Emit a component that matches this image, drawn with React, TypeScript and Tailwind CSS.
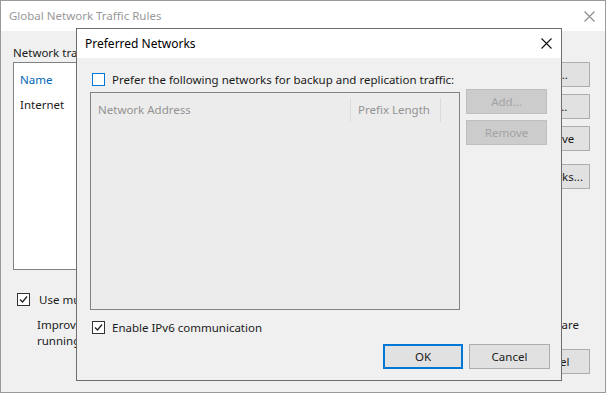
import { ReactNode } from "react";

function CloseIcon({ color }: { color: string }) {
  return (
    <svg width="11" height="11" viewBox="0 0 11 11">
      <path d="M0.5 0.5 L10.5 10.5 M10.5 0.5 L0.5 10.5" stroke={color} strokeWidth="1.1" />
    </svg>
  );
}

function CheckBox({ checked, focus }: { checked?: boolean; focus?: boolean }) {
  return (
    <div
      className={
        "w-[13px] h-[13px] shrink-0 bg-white border flex items-center justify-center " +
        (focus ? "border-[#0078d7]" : "border-[#333333]")
      }
    >
      {checked && (
        <svg width="9" height="9" viewBox="0 0 9 9">
          <path d="M1 4.5 L3.5 7 L8 1.5" stroke="#222" strokeWidth="1.3" fill="none" />
        </svg>
      )}
    </div>
  );
}

function Button({
  children,
  width,
  disabled,
  primary,
}: {
  children: ReactNode;
  width: string;
  disabled?: boolean;
  primary?: boolean;
}) {
  let cls = "h-[25px] flex items-center justify-center shrink-0 ";
  if (disabled) cls += "bg-[#cccccc] border border-[#bfbfbf] text-[#a3a3a3]";
  else if (primary) cls += "bg-[#e1e1e1] border-2 border-[#0078d7] text-[#1a1a1a]";
  else cls += "bg-[#e1e1e1] border border-[#adadad] text-[#1a1a1a]";
  return <div className={cls + " " + width}>{children}</div>;
}

function OuterWindow() {
  return (
    <div className="w-[606px] h-[393px] bg-[#f0f0f0] border border-[#9a9a9a] flex flex-col">
      <div className="h-[30px] bg-white flex items-center justify-between pl-[8px] pr-[10px] text-[#999999]">
        <span>Global Network Traffic Rules</span>
        <CloseIcon color="#8a8a8a" />
      </div>
      <div className="flex flex-col pl-[12px] pr-[15px]">
        <div className="mt-[13px] h-[18px] leading-[18px]">Network traffic rules:</div>
        <div className="flex gap-[7px]">
          <div className="flex-1 h-[208px] bg-white border border-[#828282] flex flex-col pl-[6px] pt-[8px]">
            <span className="text-[#0066b4] h-[18px]">Name</span>
            <span className="mt-[7px] h-[18px]">Internet</span>
          </div>
          <div className="flex flex-col gap-[7px] w-[75px]">
            <Button width="w-[75px]">Add...</Button>
            <Button width="w-[75px]">Edit...</Button>
            <Button width="w-[75px]">Remove</Button>
            <div className="mt-[6px]">
              <Button width="w-[75px]">Networks...</Button>
            </div>
          </div>
        </div>
        <div className="mt-[21px] flex items-center gap-[9px] pl-[4px]">
          <CheckBox checked />
          <span>Use multiple upload streams per job</span>
        </div>
        <div className="mt-[9px] pl-[24px] leading-[16px] whitespace-nowrap overflow-hidden">
          <div className="flex justify-between w-[542px]">
            <span>Improves performance on high latency links. Recommended when jobs</span>
            <span>are</span>
          </div>
          <div>running over WAN links.</div>
        </div>
        <div className="flex justify-end gap-[7px]">
          <Button width="w-[77px]">OK</Button>
          <Button width="w-[77px]">Cancel</Button>
        </div>
      </div>
    </div>
  );
}

function PreferredNetworksDialog() {
  return (
    <div className="absolute left-[76px] top-[28px] w-[486px] h-[353px] border border-[#6e6e6e] bg-[#f0f0f0] flex flex-col">
      <div className="h-[29px] bg-white flex items-center justify-between pl-[8px] pr-[9px]">
        <span className="text-[#000] text-[12px]">Preferred Networks</span>
        <CloseIcon color="#111" />
      </div>
      <div className="flex flex-col">
        <div className="mt-[15px] ml-[15px] flex items-center gap-[7px] h-[13px]">
          <CheckBox focus />
          <span>Prefer the following networks for backup and replication traffic:</span>
        </div>
        <div className="mt-[3px] ml-[13px] flex items-start gap-[6px]">
          <div className="mt-[3px] w-[370px] h-[218px] bg-[#ececec] border border-[#828282]">
            <div className="flex items-center h-[24px] mt-[5px] text-[#939393]">
              <div className="w-[260px] pl-[7px] border-r border-[#dcdcdc] h-full flex items-center">
                Network Address
              </div>
              <div className="w-[90px] pl-[7px] border-r border-[#dcdcdc] h-full flex items-center">
                Prefix Length
              </div>
            </div>
          </div>
          <div className="flex flex-col gap-[6px]">
            <Button width="w-[81px]" disabled>
              Add...
            </Button>
            <Button width="w-[81px]" disabled>
              Remove
            </Button>
          </div>
        </div>
        <div className="mt-[11px] ml-[15px] flex items-center gap-[7px] h-[13px]">
          <CheckBox checked />
          <span>Enable IPv6 communication</span>
        </div>
        <div className="mt-[10px] flex justify-end gap-[6px] pr-[11px]">
          <Button width="w-[80px]" primary>
            OK
          </Button>
          <Button width="w-[81px]">Cancel</Button>
        </div>
      </div>
    </div>
  );
}

export default function App() {
  return (
    <div className="relative w-[606px] h-[393px] overflow-hidden font-['Noto_Sans',sans-serif] text-[11.5px] text-[#1a1a1a]">
      <OuterWindow />
      <PreferredNetworksDialog />
    </div>
  );
}
